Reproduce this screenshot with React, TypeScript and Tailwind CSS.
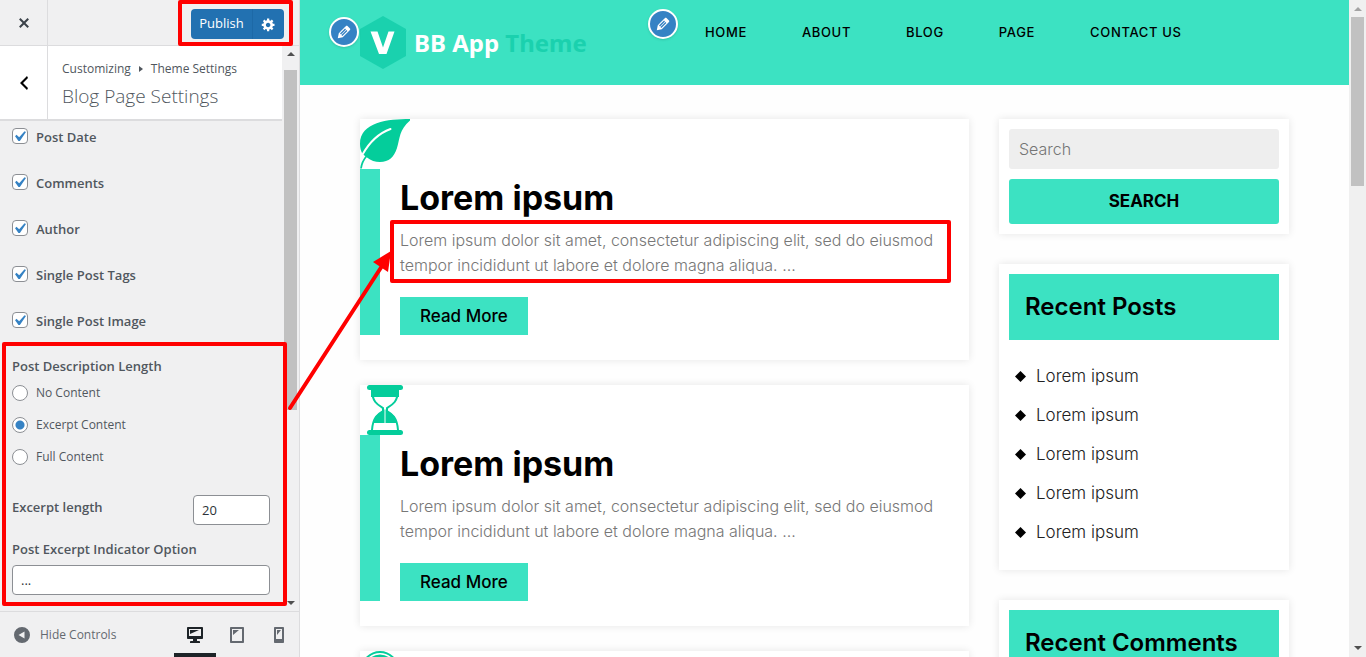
import type { ReactNode } from "react";

const toggles = ["Post Date", "Comments", "Author", "Single Post Tags", "Single Post Image"];
const contentOptions = ["No Content", "Excerpt Content", "Full Content"];
const menu = ["HOME", "ABOUT", "BLOG", "PAGE", "CONTACT US"];
const recentPosts = [1, 2, 3, 4, 5];

const excerpt =
  "Lorem ipsum dolor sit amet, consectetur adipiscing elit, sed do eiusmod tempor incididunt ut labore et dolore magna aliqua. ...";

const icons = {
  close: "M14.95 6.46L11.41 10l3.54 3.54-1.41 1.41L10 11.42l-3.53 3.53-1.42-1.42L8.58 10 5.05 6.47l1.42-1.42L10 8.58l3.54-3.53z",
  back: "M14 5l-5 5 5 5-1 2-7-7 7-7z",
  gear: "M18 12h-2.18c-.17.7-.44 1.35-.81 1.93l1.54 1.54-2.1 2.1-1.54-1.54c-.58.36-1.23.63-1.91.79V19H8v-2.18c-.68-.16-1.33-.43-1.91-.79l-1.54 1.54-2.12-2.12 1.54-1.54c-.36-.58-.63-1.23-.79-1.91H1V9.03h2.17c.16-.7.44-1.35.8-1.94L2.43 5.55l2.1-2.1 1.54 1.54c.58-.37 1.24-.64 1.93-.81V2h3v2.18c.68.16 1.33.43 1.91.79l1.54-1.54 2.12 2.12-1.54 1.54c.36.59.64 1.24.8 1.94H18V12zm-8.5 1.5c1.66 0 3-1.34 3-3s-1.34-3-3-3-3 1.34-3 3 1.34 3 3 3z",
  pencil: "M13.89 3.39l2.71 2.72c.46.46.42 1.24.03 1.64l-8.01 8.02-5.56 1.16 1.16-5.58s7.6-7.63 7.99-8.03c.39-.39 1.22-.39 1.68.07zm-2.73 2.79l-5.59 5.61 1.11 1.11 5.54-5.65zm-2.97 8.23l5.58-5.6-1.07-1.08-5.59 5.6z",
  check: "M14.83 4.89l1.34.94-5.81 8.38H9.02L5.78 9.67l1.34-1.25 2.57 2.4z",
  collapse: "M10 2a8 8 0 1 0 0 16 8 8 0 0 0 0-16zm2.5 4.500v7L6.500 10z",
  desktop: "M3 2h14c.55 0 1 .45 1 1v10c0 .55-.45 1-1 1h-5v2h2c.55 0 1 .45 1 1v1H5v-1c0-.55.45-1 1-1h2v-2H3c-.55 0-1-.45-1-1V3c0-.55.45-1 1-1zm13 9V4H4v7h12zM5 5h9L5 9V5z",
  tablet: "M4 2h12c.55 0 1 .45 1 1v14c0 .55-.45 1-1 1H4c-.55 0-1-.45-1-1V3c0-.55.45-1 1-1zm11 14V4H5v12h10zM6 5h6l-6 5V5z",
  phone: "M6 2h8c.55 0 1 .45 1 1v14c0 .55-.45 1-1 1H6c-.55 0-1-.45-1-1V3c0-.55.45-1 1-1zm7 12V4H7v10h6zM8 5h4l-4 5V5z",
};

function Icon({ name, className = "size-5" }: { name: keyof typeof icons; className?: string }) {
  return (
    <svg viewBox="0 0 20 20" fill="currentColor" fillRule="evenodd" aria-hidden="true" className={className}>
      <path d={icons[name]} />
    </svg>
  );
}

function Arrow({ down = false, className = "" }: { down?: boolean; className?: string }) {
  return (
    <svg viewBox="0 0 8 4" aria-hidden="true" className={`h-1 w-2 ${className}`}>
      <path d={down ? "M0 0h8L4 4z" : "M0 4h8L4 0z"} fill="currentColor" />
    </svg>
  );
}

function Leaf() {
  return (
    <svg viewBox="0 0 50 50" aria-hidden="true" className="size-[50px]">
      <path d="M50 0C28 0 0 3 0 25c0 4 1 7 2.500 10L7 38.500c4 3 8 4.500 13 4.500 9 0 14-5 17-14 3-10 2-18 13-27.500z" fill="#04cd9b" />
      <path d="M2.500 35.500C9 24 18 14.500 30.500 10" fill="none" stroke="#fff" strokeWidth="2" strokeLinecap="round" />
      <path d="M1 49.500C1.500 45 4 40 7 36.500" fill="none" stroke="#04cd9b" strokeWidth="1.800" />
    </svg>
  );
}

function Hourglass() {
  return (
    <svg viewBox="0 0 50 50" aria-hidden="true" className="size-[50px]">
      <g fill="#04cd9b">
        <rect x="7" width="36" height="5" rx="2.500" />
        <rect x="7" y="45" width="36" height="5" rx="2.500" />
        <path d="M11 4h28v8H11z" />
        <path d="M13 38c1-7 6-10 11-13h2c5 3 10 6 11 13z" />
      </g>
      <path d="M12 5c0 12 6 15 11 18v3c-5 3-10 6-11 19M38 5c0 12-6 15-11 18v3c5 3 10 6 11 19" fill="none" stroke="#04cd9b" strokeWidth="2" />
      <path d="M25 24v14" stroke="#a5efdc" strokeWidth="1.500" />
    </svg>
  );
}

function Target() {
  return (
    <svg viewBox="0 0 50 50" aria-hidden="true" className="size-[50px]">
      <g fill="none" stroke="#04cd9b" strokeWidth="2">
        <circle cx="20" cy="19" r="18" />
        <circle cx="20" cy="19" r="14" strokeWidth="3" />
      </g>
    </svg>
  );
}

function EditButton({ label }: { label: string }) {
  return (
    <button aria-label={label} className="flex size-[30px] items-center justify-center rounded-full border-2 border-white bg-[#3582c4] text-white shadow">
      <Icon name="pencil" className="size-[18px]" />
    </button>
  );
}

// Red outline laid over whatever it wraps
function Outline({ className }: { className: string }) {
  return <div className={`pointer-events-none absolute z-10 rounded-xs border-4 border-[#ff0000] ${className}`} />;
}

function Card({ children }: { children: ReactNode }) {
  return <article className="bg-white pb-[25px] shadow-[0_0_8px_rgba(0,0,0,0.1)]">{children}</article>;
}

function Post({ icon, marked = false }: { icon: ReactNode; marked?: boolean }) {
  return (
    <Card>
      {icon}
      <div className="border-l-20 border-[#3ce2c2] pt-2 pl-5">
        <h2 className="mb-[9px] text-[34px] leading-[42px] font-bold text-black">Lorem ipsum</h2>
        <div className="relative mb-[19px] w-fit max-w-[550px]">
          <p className="text-base leading-[25px] font-light text-[#777]">{excerpt}</p>
          {marked && <Outline className="-top-2 -right-px -bottom-[5px] -left-[10px]" />}
        </div>
        <a href="#" className="inline-block bg-[#3ce2c2] px-5 text-[17px] leading-[38px] font-medium text-black align-top">
          Read More
        </a>
      </div>
    </Card>
  );
}

function Widget({ title, children }: { title?: string; children?: ReactNode }) {
  return (
    <section className="bg-white p-[10px] shadow-[0_0_8px_rgba(0,0,0,0.1)]">
      {title && <h3 className="bg-[#3ce2c2] px-4 text-2xl leading-[66px] font-semibold text-black">{title}</h3>}
      {children}
    </section>
  );
}

function Controls() {
  return (
    <aside className="flex w-[300px] shrink-0 flex-col border-r border-[#dcdcde] bg-[#f0f0f1] font-['Open_Sans',sans-serif] text-[13px] text-[#50575e]">
      <header className="flex h-[46px] shrink-0 items-stretch justify-between border-b border-[#dcdcde]">
        <button aria-label="Close" className="flex w-12 items-center justify-center border-r border-[#dcdcde] text-[#3c434a]">
          <Icon name="close" />
        </button>
        <div className="relative mt-[9px] mr-[15px] flex h-[30px] rounded-sm bg-[#2271b1] text-white">
          <button className="w-[62px] border-r border-[#1d69a7] text-[13px]">Publish</button>
          <button aria-label="Publish settings" className="flex w-[31px] items-center justify-center">
            <Icon name="gear" className="size-[15px]" />
          </button>
          <Outline className="-top-[9px] -right-[9px] -bottom-[7px] -left-[13px]" />
        </div>
      </header>

      <div className="flex min-h-0 flex-1 overflow-hidden">
        <div className="min-w-0 flex-1">
          <div className="flex h-[75px] border-b-2 border-[#dcdcde] bg-white">
            <button aria-label="Back" className="flex w-12 items-center justify-center border-r border-[#dcdcde] text-black">
              <Icon name="back" />
            </button>
            <div className="pt-3 pl-[14px]">
              <p className="flex items-center text-xs leading-[22px]">
                Customizing
                <svg viewBox="0 0 4 6" aria-hidden="true" className="mx-2 h-[6px] w-1">
                  <path d="M0 0l4 3-4 3z" fill="currentColor" />
                </svg>
                Theme Settings
              </p>
              <h1 className="text-[19px] leading-8 font-light">Blog Page Settings</h1>
            </div>
          </div>

          <div className="px-3 pt-[5px]">
            {toggles.map((name) => (
              <label key={name} className="relative mb-[26px] flex h-5 items-center gap-2 text-[13px] font-semibold">
                <input type="checkbox" defaultChecked className="peer size-4 appearance-none rounded-sm border border-[#8c8f94] bg-white" />
                <Icon name="check" className="absolute -left-[3px] size-[21px] text-[#3582c4] opacity-0 peer-checked:opacity-100" />
                <span className="pt-[3px]">{name}</span>
              </label>
            ))}
          </div>

          <div className="relative px-3 pb-4">
            <fieldset>
              <legend className="text-[13px] leading-5 font-semibold">Post Description Length</legend>
              {contentOptions.map((name) => (
                <label key={name} className="mb-3 flex h-5 items-center gap-2 text-xs first-of-type:mt-[7px]">
                  <input
                    type="radio"
                    name="content"
                    defaultChecked={name === "Excerpt Content"}
                    className="size-4 appearance-none rounded-full border border-[#8c8f94] bg-white checked:bg-[radial-gradient(circle,#3582c4_4px,#fff_5px)]"
                  />
                  {name}
                </label>
              ))}
            </fieldset>
            <div className="mt-4 flex justify-between">
              <label htmlFor="excerpt-length" className="leading-6 font-semibold">Excerpt length</label>
              <input id="excerpt-length" defaultValue="20" className="h-[30px] w-[77px] rounded-sm border border-[#8c8f94] bg-white px-2 text-[13px] text-[#2c3338]" />
            </div>
            <label htmlFor="indicator" className="mt-[14px] block leading-5 font-semibold">Post Excerpt Indicator Option</label>
            <input id="indicator" defaultValue="..." className="mt-[6px] block h-[30px] w-full rounded-sm border border-[#8c8f94] bg-white px-2 text-[13px] text-[#2c3338]" />
            <Outline className="-top-[14px] -right-[5px] bottom-[5px] left-[2px]" />
          </div>
        </div>

        <div className="flex w-[17px] shrink-0 flex-col items-center justify-between py-[6px] text-[#505050]">
          <Arrow />
          <div className="mt-[14px] h-[340px] w-[13px] bg-[#c1c1c1]" />
          <div className="flex-1" />
          <Arrow down />
        </div>
      </div>

      <footer className="flex h-[46px] shrink-0 items-stretch justify-between border-t border-[#dcdcde] text-[#646970]">
        <button className="flex items-center gap-2 pl-3 text-xs">
          <Icon name="collapse" />
          Hide Controls
        </button>
        <div className="flex">
          <button aria-label="Desktop preview" className="flex w-[42px] items-center justify-center border-y-4 border-t-transparent border-b-[#1d2327] text-[#1d2327]">
            <Icon name="desktop" />
          </button>
          <button aria-label="Tablet preview" className="flex w-[42px] items-center justify-center">
            <Icon name="tablet" />
          </button>
          <button aria-label="Mobile preview" className="flex w-[41px] items-center justify-center">
            <Icon name="phone" />
          </button>
        </div>
      </footer>
    </aside>
  );
}

function Preview() {
  return (
    <div className="min-w-0 flex-1 overflow-hidden bg-[#fefefe] font-[Inter,sans-serif]">
      <header className="h-[85px] bg-[#3ce2c2]">
        <div className="relative mx-auto flex max-w-[929px] items-start">
          <a href="#" className="mt-4 flex items-center gap-2 font-['Noto_Sans',sans-serif] text-2xl font-bold text-white">
            <svg viewBox="0 0 46 53" aria-hidden="true" className="h-[53px] w-[46px]">
              <path d="M23 0l23 13v27L23 53 0 40V13z" fill="#1ad1ae" />
              <path d="M10.500 15.500h7L23 31.500l5.500-16h6L26.500 38h-7.500z" fill="#fff" />
            </svg>
            <span className="whitespace-nowrap">
              BB App <span className="text-[#1ad1ae]">Theme</span>
            </span>
          </a>
          <nav className="absolute top-[22px] left-[345px]">
            <ul className="flex gap-[55px] text-[13px] leading-5 font-medium tracking-wider whitespace-nowrap text-black">
              {menu.map((item) => (
                <li key={item}>
                  <a href="#">{item}</a>
                </li>
              ))}
            </ul>
          </nav>
          <div className="absolute top-[17px] -left-[31px]">
            <EditButton label="Edit logo" />
          </div>
          <div className="absolute top-[9px] left-[288px]">
            <EditButton label="Edit menu" />
          </div>
        </div>
      </header>

      <div className="mx-auto mt-[34px] flex max-w-[929px] items-start gap-[30px]">
        <main className="flex min-w-0 flex-1 flex-col gap-[25px]">
          <Post icon={<Leaf />} marked />
          <Post icon={<Hourglass />} />
          <Card>
            <Target />
          </Card>
        </main>
        <aside className="flex w-[290px] shrink-0 flex-col gap-[30px]">
          <Widget>
            <form className="flex flex-col gap-[10px]">
              <input aria-label="Search" placeholder="Search" className="h-10 rounded-[3px] bg-[#eee] px-[10px] text-base font-light placeholder:text-[#757575]" />
              <button type="button" className="h-[45px] rounded-[3px] bg-[#3ce2c2] text-[17px] font-bold text-black">SEARCH</button>
            </form>
          </Widget>
          <Widget title="Recent Posts">
            <ul className="pt-[17px] pb-2 pl-[6px] text-[17px] leading-[39px] font-light text-[#222]">
              {recentPosts.map((id) => (
                <li key={id} className="flex items-center gap-[10px]">
                  <svg viewBox="0 0 11 11" aria-hidden="true" className="size-[11px]">
                    <path d="M5.500 0L11 5.500 5.500 11 0 5.500z" fill="#000" />
                  </svg>
                  <a href="#">Lorem ipsum</a>
                </li>
              ))}
            </ul>
          </Widget>
          <Widget title="Recent Comments" />
        </aside>
      </div>
    </div>
  );
}

export default function App() {
  return (
    <div className="relative flex h-screen overflow-hidden">
      <Controls />
      <Preview />
      <div className="flex w-[17px] shrink-0 flex-col items-center bg-[#f0f0f0] py-[7px]">
        <Arrow className="text-[#a3a3a3]" />
        <div className="mt-[6px] h-[169px] w-[13px] bg-[#c1c1c1]" />
        <Arrow down className="mt-auto text-[#505050]" />
      </div>

      {/* Arrow from the description settings to the excerpt */}
      <svg viewBox="0 0 110 170" aria-hidden="true" className="pointer-events-none absolute top-[245px] left-[285px] z-20 h-[170px] w-[110px]">
        <path d="M5 163L97 21" stroke="#f00" strokeWidth="4" strokeLinecap="round" />
        <path d="M106 6L88 17l15 10z" fill="#f00" />
      </svg>
    </div>
  );
}
